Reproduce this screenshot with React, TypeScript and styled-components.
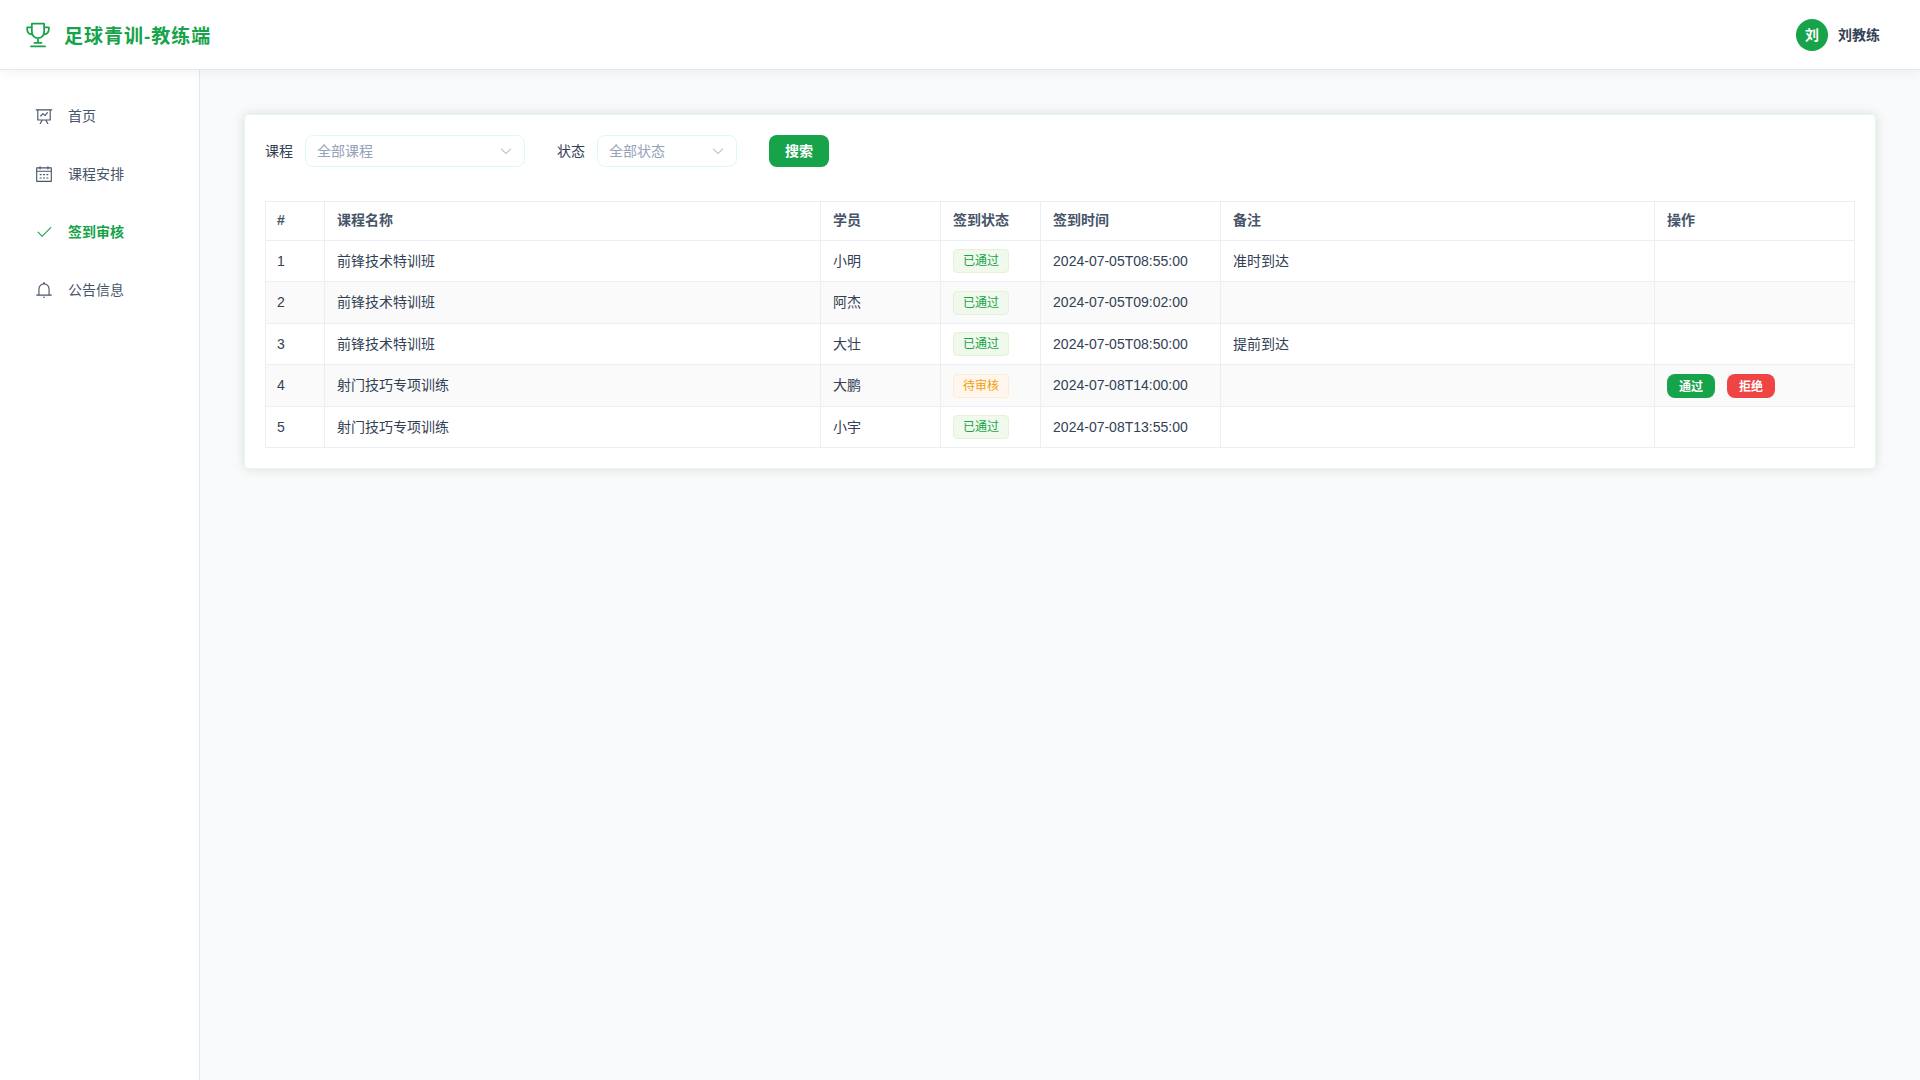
import React, { useId, useState } from "react";
import styled, { createGlobalStyle } from "styled-components";

const GlobalStyle = createGlobalStyle`
  *, *::before, *::after { box-sizing: border-box; }
  body {
    margin: 0;
    background: #f8fafc;
    color: #334155;
    font-family: "Liberation Sans", "Noto Sans CJK SC", sans-serif;
    font-size: 14px;
    line-height: 20px;
  }
  button, select { font: inherit; }
`;

const Page = styled.div`
  display: flex;
  flex-direction: column;
  min-height: 100vh;
`;

const Header = styled.header`
  position: relative;
  z-index: 1;
  display: flex;
  align-items: center;
  justify-content: space-between;
  height: 70px;
  padding: 0 40px 0 24px;
  background: #fff;
  border-bottom: 1px solid #e2e8f0;
  box-shadow: 0 2px 12px rgba(0, 0, 0, 0.06);
`;

const Brand = styled.div`
  display: flex;
  align-items: center;
  gap: 12px;
  color: #16a34a;
`;

const BrandName = styled.h1`
  margin: 0;
  font-size: 19px;
  line-height: normal;
  font-weight: 700;
  letter-spacing: 1px;
`;

const User = styled.div`
  display: flex;
  align-items: center;
  gap: 10px;
  font-weight: 700;
`;

const Avatar = styled.span`
  display: grid;
  place-items: center;
  width: 32px;
  height: 32px;
  border-radius: 50%;
  background: #16a34a;
  color: #fff;
`;

const Body = styled.div`
  display: flex;
  flex: 1;
`;

const Sidebar = styled.nav`
  flex: none;
  display: flex;
  flex-direction: column;
  gap: 8px;
  width: 200px;
  padding: 21px 15px;
  background: #fff;
  border-right: 1px solid #e2e8f0;
`;

const MenuLink = styled.a<{ $active: boolean }>`
  display: flex;
  align-items: center;
  gap: 15px;
  height: 50px;
  padding: 0 20px;
  color: ${(p) => (p.$active ? "#16a34a" : "#475569")};
  font-weight: ${(p) => (p.$active ? 700 : 400)};
  text-decoration: none;
`;

const Svg = styled.svg<{ $size: number }>`
  flex: none;
  width: ${(p) => p.$size}px;
  height: ${(p) => p.$size}px;
  fill: currentColor;
`;

const Main = styled.main`
  flex: 1;
  min-width: 0;
  padding: 44px;
`;

const Card = styled.section`
  padding: 20px;
  background: #fff;
  border: 1px solid #dcfce7;
  border-radius: 4px;
  box-shadow: 0 0 12px rgba(0, 0, 0, 0.12);
`;

const Filters = styled.form`
  display: flex;
  align-items: center;
  flex-wrap: wrap;
  gap: 32px;
  margin-bottom: 34px;
`;

const Field = styled.div`
  display: flex;
  align-items: center;
  gap: 12px;
`;

const SelectBox = styled.div<{ $width: number }>`
  display: grid;
  align-items: center;
  width: ${(p) => p.$width}px;
  color: #a8abb2;

  > * { grid-area: 1 / 1; }
  > svg {
    justify-self: end;
    margin-right: 12px;
    pointer-events: none;
  }
`;

const Select = styled.select`
  appearance: none;
  width: 100%;
  height: 32px;
  padding: 0 32px 0 11px;
  border: 1px solid #dcfce7;
  border-radius: 8px;
  background: #fff;
  color: #94a3b8;
  line-height: normal;
`;

const Button = styled.button<{ $tone?: "danger"; $small?: boolean }>`
  height: ${(p) => (p.$small ? 24 : 32)}px;
  padding: ${(p) => (p.$small ? "2px 12px 0" : "0 16px")};
  border: 0;
  border-radius: 8px;
  background: ${(p) => (p.$tone === "danger" ? "#ef4444" : "#16a34a")};
  color: #fff;
  font-size: ${(p) => (p.$small ? 12 : 14)}px;
  font-weight: 700;
  cursor: pointer;
`;

const Table = styled.table`
  width: 100%;
  table-layout: fixed;
  border-collapse: separate;
  border-spacing: 0;
`;

const Col = styled.col<{ $width?: string }>`
  width: ${(p) => p.$width ?? "auto"};
`;

const Row = styled.tr`
  height: 41px;

  tbody > &:nth-child(even) {
    height: 42px;
    background: #fafafa;
  }
`;

const Cell = styled.td`
  padding: 0 12px;
  border: solid #ebeef5;
  border-width: 0 1px 1px 0;
  line-height: 23px;
  text-align: left;

  &:first-child {
    padding-left: 11px;
    border-left-width: 1px;
  }
`;

const HeadCell = styled(Cell).attrs({ as: "th", scope: "col" })`
  height: 40px;
  padding-bottom: 2px;
  border-top-width: 1px;
  color: #475569;
  font-weight: 700;
  line-height: 22px;
`;

const Tag = styled.span<{ $pending: boolean }>`
  display: inline-flex;
  align-items: center;
  height: 24px;
  padding: 0 9px;
  border: 1px solid ${(p) => (p.$pending ? "#fdebd8" : "#e1f3d8")};
  border-radius: 4px;
  background: ${(p) => (p.$pending ? "#fff7ed" : "#f0f9eb")};
  color: ${(p) => (p.$pending ? "#f59e0b" : "#16a34a")};
  font-size: 12px;
  line-height: 12px;
  vertical-align: middle;
`;

const Actions = styled.div`
  display: flex;
  gap: 12px;
`;

const paths = {
  board:
    "M359.168 768H160a32 32 0 0 1-32-32V192H64a32 32 0 0 1 0-64h896a32 32 0 1 1 0 64h-64v544a32 32 0 0 1-32 32H665.216l110.848 192h-73.856L591.36 768H433.024L322.176 960H248.32zM832 192H192v512h640zM342.656 534.656a32 32 0 1 1-45.312-45.312L444.992 341.76l125.44 94.08L679.04 300.032a32 32 0 1 1 49.92 39.936L581.632 524.224 451.008 426.24 342.656 534.592z",
  calendar:
    "M128 384v512h768V192H768v32a32 32 0 1 1-64 0v-32H320v32a32 32 0 0 1-64 0v-32H128v128h768v64zm192-256h384V96a32 32 0 1 1 64 0v32h160a32 32 0 0 1 32 32v768a32 32 0 0 1-32 32H96a32 32 0 0 1-32-32V160a32 32 0 0 1 32-32h160V96a32 32 0 0 1 64 0zm-32 384h64a32 32 0 0 1 0 64h-64a32 32 0 0 1 0-64m0 192h64a32 32 0 1 1 0 64h-64a32 32 0 1 1 0-64m192-192h64a32 32 0 0 1 0 64h-64a32 32 0 0 1 0-64m0 192h64a32 32 0 1 1 0 64h-64a32 32 0 1 1 0-64m192-192h64a32 32 0 1 1 0 64h-64a32 32 0 1 1 0-64m0 192h64a32 32 0 1 1 0 64h-64a32 32 0 1 1 0-64",
  check:
    "M406.656 706.944 195.712 496.256a32 32 0 1 0-45.248 45.248l256 256 512-512a32 32 0 0 0-45.248-45.248L406.592 706.944z",
  bell:
    "M512 64a64 64 0 0 1 64 64v64H448v-64a64 64 0 0 1 64-64M256 768h512V448a256 256 0 1 0-512 0zm256-640a320 320 0 0 1 320 320v384H192V448a320 320 0 0 1 320-320M96 768h832q32 0 32 32t-32 32H96q-32 0-32-32t32-32m352 128h128a64 64 0 0 1-128 0",
  down:
    "M831.872 340.864 512 652.672 192.128 340.864a30.592 30.592 0 0 0-42.752 0 29.12 29.12 0 0 0 0 41.6L489.664 714.24a32 32 0 0 0 44.672 0l340.288-331.712a29.12 29.12 0 0 0 0-41.728 30.592 30.592 0 0 0-42.752 0z",
};

type IconName = keyof typeof paths;

const Icon = ({ name, size }: { name: IconName; size: number }) => (
  <Svg $size={size} viewBox="0 0 1024 1024" aria-hidden="true">
    <path d={paths[name]} />
  </Svg>
);

const Trophy = () => (
  <Svg $size={28} viewBox="0 0 1024 1024" aria-hidden="true">
    <path
      d="M288 96h448v304a224 224 0 0 1-448 0zM288 232H116v80a176 176 0 0 0 184 176M736 232h172v80a176 176 0 0 1-184 176M512 624v176M384 800h256M256 928h512"
      fill="none"
      stroke="currentColor"
      strokeWidth="64"
      strokeLinecap="round"
      strokeLinejoin="round"
    />
  </Svg>
);

const menu: { icon: IconName; label: string; active?: boolean }[] = [
  { icon: "board", label: "首页" },
  { icon: "calendar", label: "课程安排" },
  { icon: "check", label: "签到审核", active: true },
  { icon: "bell", label: "公告信息" },
];

const columns: { title: string; width?: string }[] = [
  { title: "#", width: "60px" },
  { title: "课程名称", width: "31.2%" },
  { title: "学员", width: "120px" },
  { title: "签到状态", width: "100px" },
  { title: "签到时间", width: "180px" },
  { title: "备注" },
  { title: "操作", width: "200px" },
];

const records = [
  { course: "前锋技术特训班", student: "小明", status: "已通过", time: "2024-07-05T08:55:00", note: "准时到达" },
  { course: "前锋技术特训班", student: "阿杰", status: "已通过", time: "2024-07-05T09:02:00", note: "" },
  { course: "前锋技术特训班", student: "大壮", status: "已通过", time: "2024-07-05T08:50:00", note: "提前到达" },
  { course: "射门技巧专项训练", student: "大鹏", status: "待审核", time: "2024-07-08T14:00:00", note: "" },
  { course: "射门技巧专项训练", student: "小宇", status: "已通过", time: "2024-07-08T13:55:00", note: "" },
];

function FilterSelect(props: { label: string; options: string[]; width: number }) {
  const id = useId();
  const [value, setValue] = useState(props.options[0]);
  return (
    <Field>
      <label htmlFor={id}>{props.label}</label>
      <SelectBox $width={props.width}>
        <Select id={id} value={value} onChange={(e) => setValue(e.target.value)}>
          {props.options.map((o) => (
            <option key={o}>{o}</option>
          ))}
        </Select>
        <Icon name="down" size={14} />
      </SelectBox>
    </Field>
  );
}

export default function App() {
  return (
    <Page>
      <GlobalStyle />
      <Header>
        <Brand>
          <Trophy />
          <BrandName>足球青训-教练端</BrandName>
        </Brand>
        <User>
          <Avatar>刘</Avatar>
          <span>刘教练</span>
        </User>
      </Header>
      <Body>
        <Sidebar>
          {menu.map((m) => (
            <MenuLink key={m.label} href="#" $active={!!m.active} aria-current={m.active ? "page" : undefined}>
              <Icon name={m.icon} size={18} />
              <span>{m.label}</span>
            </MenuLink>
          ))}
        </Sidebar>
        <Main>
          <Card>
            <Filters onSubmit={(e) => e.preventDefault()}>
              <FilterSelect label="课程" width={220} options={["全部课程", "前锋技术特训班", "射门技巧专项训练"]} />
              <FilterSelect label="状态" width={140} options={["全部状态", "已通过", "待审核"]} />
              <Button type="submit">搜索</Button>
            </Filters>
            <Table>
              <colgroup>
                {columns.map((c) => (
                  <Col key={c.title} $width={c.width} />
                ))}
              </colgroup>
              <thead>
                <tr>
                  {columns.map((c) => (
                    <HeadCell key={c.title}>{c.title}</HeadCell>
                  ))}
                </tr>
              </thead>
              <tbody>
                {records.map((r, i) => (
                  <Row key={r.time}>
                    <Cell>{i + 1}</Cell>
                    <Cell>{r.course}</Cell>
                    <Cell>{r.student}</Cell>
                    <Cell>
                      <Tag $pending={r.status === "待审核"}>{r.status}</Tag>
                    </Cell>
                    <Cell>{r.time}</Cell>
                    <Cell>{r.note}</Cell>
                    <Cell>
                      {r.status === "待审核" && (
                        <Actions>
                          <Button type="button" $small>通过</Button>
                          <Button type="button" $small $tone="danger">拒绝</Button>
                        </Actions>
                      )}
                    </Cell>
                  </Row>
                ))}
              </tbody>
            </Table>
          </Card>
        </Main>
      </Body>
    </Page>
  );
}
